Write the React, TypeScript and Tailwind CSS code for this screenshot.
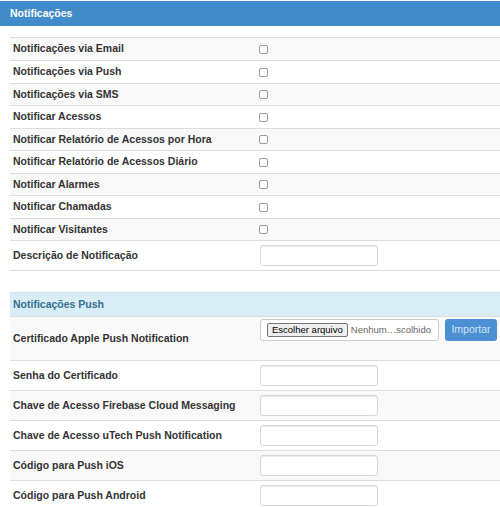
import React from "react";

const checkRows = [
  { label: "Notificações via Email", h: "h-[23px]", striped: true },
  { label: "Notificações via Push", h: "h-[23px]", striped: false },
  { label: "Notificações via SMS", h: "h-[22px]", striped: true },
  { label: "Notificar Acessos", h: "h-[23px]", striped: false },
  { label: "Notificar Relatório de Acessos por Hora", h: "h-[22px]", striped: true },
  { label: "Notificar Relatório de Acessos Diário", h: "h-[23px]", striped: false },
  { label: "Notificar Alarmes", h: "h-[22px]", striped: true },
  { label: "Notificar Chamadas", h: "h-[23px]", striped: false },
  { label: "Notificar Visitantes", h: "h-[22px]", striped: true },
];

const pushRows = [
  { label: "Senha do Certificado", striped: false },
  { label: "Chave de Acesso Firebase Cloud Messaging", striped: true },
  { label: "Chave de Acesso uTech Push Notification", striped: false },
  { label: "Código para Push iOS", striped: true },
  { label: "Código para Push Android", striped: false },
];

function TextBox() {
  return (
    <div className="w-[118px] h-[21px] border border-[#d6d6d6] rounded-[3px] bg-white shadow-[inset_0_1px_1px_rgba(0,0,0,0.075)]" />
  );
}

function CheckBox() {
  return (
    <span className="inline-block w-[9px] h-[9px] ml-[-1px] border border-[#9a9a9a] rounded-[2px] bg-white" />
  );
}

export default function App() {
  return (
    <div
      className="w-[500px] h-[507px] overflow-hidden bg-white pt-px text-[10.5px] text-[#333]"
      style={{ fontFamily: '"Liberation Sans", Arial, sans-serif' }}
    >
      {/* Cabeçalho */}
      <div className="h-[25px] bg-[#428bca] px-[10px] flex items-center text-white font-bold">
        Notificações
      </div>

      <div className="pl-[10px] pt-[11px]">
        {checkRows.map((row) => (
          <div
            key={row.label}
            className={`flex items-center border-t border-[#ddd] ${row.h} ${row.striped ? "bg-[#f9f9f9]" : "bg-white"}`}
          >
            <div className="w-[246px] pl-[3px] font-bold">{row.label}</div>
            <div className="pl-[4px] flex items-center">
              <CheckBox />
            </div>
          </div>
        ))}

        <div className="flex items-center border-t border-[#ddd] h-[30px] bg-white">
          <div className="w-[246px] pl-[3px] font-bold">Descrição de Notificação</div>
          <div className="pl-[4px]">
            <TextBox />
          </div>
        </div>

        <div className="border-t border-[#ddd] h-[22px] bg-white" />

        {/* Notificações Push */}
        <div className="h-[24px] bg-[#d9edf7] flex items-center pl-[3px] font-bold text-[#31708f] border-t border-[#d0e4ee]">
          Notificações Push
        </div>

        <div className="flex border-t border-[#ddd] h-[44px] bg-[#f9f9f9]">
          <div className="w-[246px] pl-[3px] font-bold self-center">
            Certificado Apple Push Notification
          </div>
          <div className="pl-[4px] pt-[2px] flex items-start">
            <div className="w-[179px] h-[22px] border border-[#ccc] rounded-[3px] bg-white flex items-center pl-[6px] overflow-hidden whitespace-nowrap">
              <span className="h-[14px] px-[4px] flex items-center border border-[#767676] bg-[#efefef] rounded-[2px] text-black text-[9.5px] leading-none">
                Escolher arquivo
              </span>
              <span className="ml-[3px] text-[#666] text-[9.5px]">Nenhum…scolhido</span>
            </div>
            <div className="ml-[6px] w-[52px] h-[22px] rounded-[3px] bg-[#4a90d2] text-[#d3e3f3] flex items-center justify-center">
              Importar
            </div>
          </div>
        </div>

        {pushRows.map((row) => (
          <div
            key={row.label}
            className={`flex items-center border-t border-[#ddd] h-[30px] ${row.striped ? "bg-[#f9f9f9]" : "bg-white"}`}
          >
            <div className="w-[246px] pl-[3px] font-bold">{row.label}</div>
            <div className="pl-[4px]">
              <TextBox />
            </div>
          </div>
        ))}
      </div>
    </div>
  );
}
